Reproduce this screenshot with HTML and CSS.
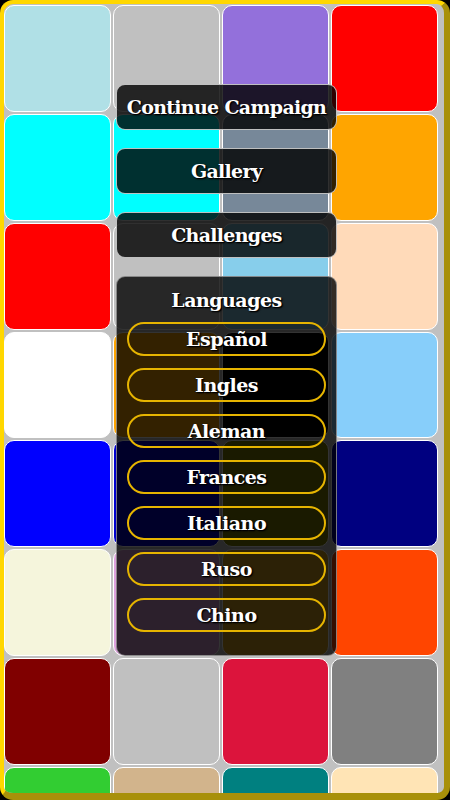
FILE: index.html
```html
<!DOCTYPE html>
<html>
<head>
<meta charset="utf-8">
<link rel="stylesheet" href="styles.css">
</head>
<body>
<div class="frame">
  <div class="grid">
    <div class="tile" style="background:#b0e0e6"></div>
    <div class="tile" style="background:#c0c0c0"></div>
    <div class="tile" style="background:#9370db"></div>
    <div class="tile" style="background:#ff0000"></div>

    <div class="tile" style="background:#00ffff"></div>
    <div class="tile" style="background:#00ffff"></div>
    <div class="tile" style="background:#778899"></div>
    <div class="tile" style="background:#ffa500"></div>

    <div class="tile" style="background:#ff0000"></div>
    <div class="tile" style="background:#c0c0c0"></div>
    <div class="tile" style="background:#87ceeb"></div>
    <div class="tile" style="background:#ffdab9"></div>

    <div class="tile" style="background:#ffffff"></div>
    <div class="tile" style="background:#ffa500"></div>
    <div class="tile" style="background:#000000"></div>
    <div class="tile" style="background:#87cefa"></div>

    <div class="tile" style="background:#0000ff"></div>
    <div class="tile" style="background:#0000cd"></div>
    <div class="tile" style="background:#808000"></div>
    <div class="tile" style="background:#000080"></div>

    <div class="tile" style="background:#f5f5dc"></div>
    <div class="tile" style="background:#dda0dd"></div>
    <div class="tile" style="background:#daa520"></div>
    <div class="tile" style="background:#ff4500"></div>

    <div class="tile" style="background:#800000"></div>
    <div class="tile" style="background:#c0c0c0"></div>
    <div class="tile" style="background:#dc143c"></div>
    <div class="tile" style="background:#808080"></div>

    <div class="tile" style="background:#32cd32"></div>
    <div class="tile" style="background:#d2b48c"></div>
    <div class="tile" style="background:#008080"></div>
    <div class="tile" style="background:#ffe4b5"></div>
  </div>

  <div class="menu">
    <div class="btn">Continue Campaign</div>
    <div class="btn">Gallery</div>
    <div class="btn">Challenges</div>
    <div class="panel">
      <div class="panel-title">Languages</div>
      <div class="lang-list">
        <div class="lang">Español</div>
        <div class="lang">Ingles</div>
        <div class="lang">Aleman</div>
        <div class="lang">Frances</div>
        <div class="lang">Italiano</div>
        <div class="lang">Ruso</div>
        <div class="lang">Chino</div>
      </div>
    </div>
  </div>
</div>
</body>
</html>
```

FILE: styles.css
```css
html, body {
  margin: 0;
  padding: 0;
  background: #000;
}

.frame {
  position: relative;
  width: 450px;
  height: 800px;
  box-sizing: border-box;
  border-style: solid;
  border-width: 4px 6px 7px 4px;
  border-color: #ffd700 #a8900a #a8900a #ffd700;
  border-radius: 13px;
  background: #c0c0c0;
  overflow: hidden;
}

.grid {
  display: grid;
  grid-template-columns: repeat(4, 107px);
  grid-auto-rows: 106.86px;
  gap: 2px;
  padding-top: 1px;
}

.tile {
  box-sizing: border-box;
  border: 1px solid #ffffff;
  border-radius: 10px;
}

.menu {
  position: absolute;
  left: 112px;
  top: 80px;
  width: 221px;
  display: flex;
  flex-direction: column;
  gap: 18px;
  font-family: "DejaVu Serif", "Liberation Serif", serif;
  font-weight: bold;
  color: #fff;
  text-shadow: 1px 1px 2px #000, 1px 1px 1px #000;
}

.btn {
  box-sizing: border-box;
  height: 46px;
  border: 1px solid rgba(220, 220, 220, 0.85);
  border-radius: 9px;
  background: rgba(0, 0, 0, 0.81);
  display: flex;
  align-items: center;
  justify-content: center;
  font-size: 19px;
  letter-spacing: -0.7px;
}

.panel {
  box-sizing: border-box;
  height: 380px;
  border: 1px solid rgba(200, 200, 200, 0.6);
  border-radius: 9px;
  background: rgba(0, 0, 0, 0.8);
  padding: 0 10px;
}

.panel-title {
  height: 45px;
  display: flex;
  align-items: center;
  justify-content: center;
  font-size: 19px;
  letter-spacing: -0.5px;
}

.lang-list {
  display: flex;
  flex-direction: column;
  gap: 12px;
}

.lang {
  box-sizing: border-box;
  height: 34px;
  border: 2px solid #e6b400;
  border-radius: 17px;
  display: flex;
  align-items: center;
  justify-content: center;
  font-size: 19px;
  letter-spacing: -0.5px;
}
```
